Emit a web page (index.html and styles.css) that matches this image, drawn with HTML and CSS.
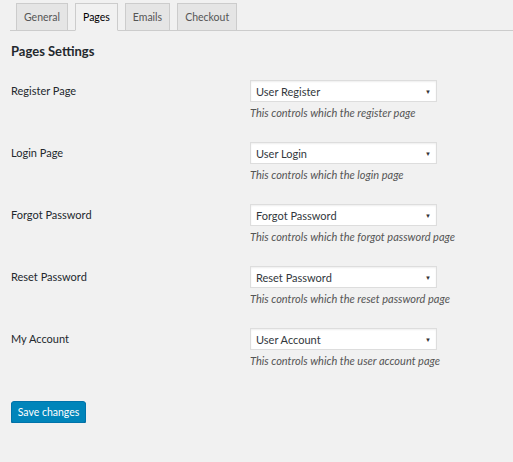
FILE: index.html
```html
<!DOCTYPE html>
<html>
<head>
<meta charset="utf-8">
<link rel="stylesheet" href="styles.css">
</head>
<body>
<div class="wrap">
  <nav class="tabs">
    <a class="tab">General</a>
    <a class="tab active">Pages</a>
    <a class="tab">Emails</a>
    <a class="tab">Checkout</a>
  </nav>
  <h2 class="title">Pages Settings</h2>
  <div class="table">
    <div class="row">
      <div class="label">Register Page</div>
      <div class="field">
        <div class="select"><span>User Register</span><span class="arrow">▼</span></div>
        <p class="desc">This controls which the register page</p>
      </div>
    </div>
    <div class="row">
      <div class="label">Login Page</div>
      <div class="field">
        <div class="select"><span>User Login</span><span class="arrow">▼</span></div>
        <p class="desc">This controls which the login page</p>
      </div>
    </div>
    <div class="row">
      <div class="label">Forgot Password</div>
      <div class="field">
        <div class="select"><span>Forgot Password</span><span class="arrow">▼</span></div>
        <p class="desc">This controls which the forgot password page</p>
      </div>
    </div>
    <div class="row">
      <div class="label">Reset Password</div>
      <div class="field">
        <div class="select"><span>Reset Password</span><span class="arrow">▼</span></div>
        <p class="desc">This controls which the reset password page</p>
      </div>
    </div>
    <div class="row">
      <div class="label">My Account</div>
      <div class="field">
        <div class="select"><span>User Account</span><span class="arrow">▼</span></div>
        <p class="desc">This controls which the user account page</p>
      </div>
    </div>
  </div>
  <button class="save">Save changes</button>
</div>
</body>
</html>
```
FILE: styles.css
```css
html, body {
  margin: 0;
  padding: 0;
  background: #f1f1f1;
}
body {
  font-family: Lato, "Open Sans", sans-serif;
  font-size: 11px;
  color: #23282d;
}
.wrap {
  padding: 3px 0 0 10px;
}
.tabs {
  display: flex;
  gap: 7px;
  padding-left: 6px;
  border-bottom: 1px solid #ccc;
  height: 27px;
}
.tab {
  box-sizing: border-box;
  height: 28px;
  padding: 0 7px;
  display: flex;
  align-items: center;
  background: #e5e5e5;
  border: 1px solid #ccc;
  color: #555;
  font-size: 10.5px;
}
.tab.active {
  background: #f1f1f1;
  border-bottom-color: #f1f1f1;
  color: #000;
}
.title {
  margin: 10px 0 0 1px;
  font-size: 13px;
  font-weight: 700;
  line-height: 20px;
  color: #23282d;
}
.table {
  margin-top: 19px;
}
.row {
  display: flex;
  height: 62px;
}
.label {
  width: 239px;
  padding-left: 1px;
  padding-top: 2px;
  line-height: 18px;
}
.field {
  display: flex;
  flex-direction: column;
}
.select {
  box-sizing: border-box;
  width: 187px;
  height: 22px;
  background: #fff;
  border: 1px solid #ddd;
  box-shadow: inset 0 1px 2px rgba(0,0,0,0.07);
  display: flex;
  align-items: center;
  justify-content: space-between;
  padding: 0 5px 0 5px;
  color: #32373c;
}
.arrow {
  font-size: 6px;
  color: #333;
}
.desc {
  margin: 3px 0 0 0;
  font-style: italic;
  color: #555;
  font-size: 11px;
  line-height: 16px;
}
.save {
  margin: 11px 0 0 1px;
  height: 22px;
  width: 75px;
  padding: 0;
  background: #0085ba;
  border: 1px solid #0073aa;
  border-radius: 3px;
  box-shadow: 0 1px 0 #006799;
  color: #fff;
  font-family: Lato, "Open Sans", sans-serif;
  font-size: 10.5px;
}
```
